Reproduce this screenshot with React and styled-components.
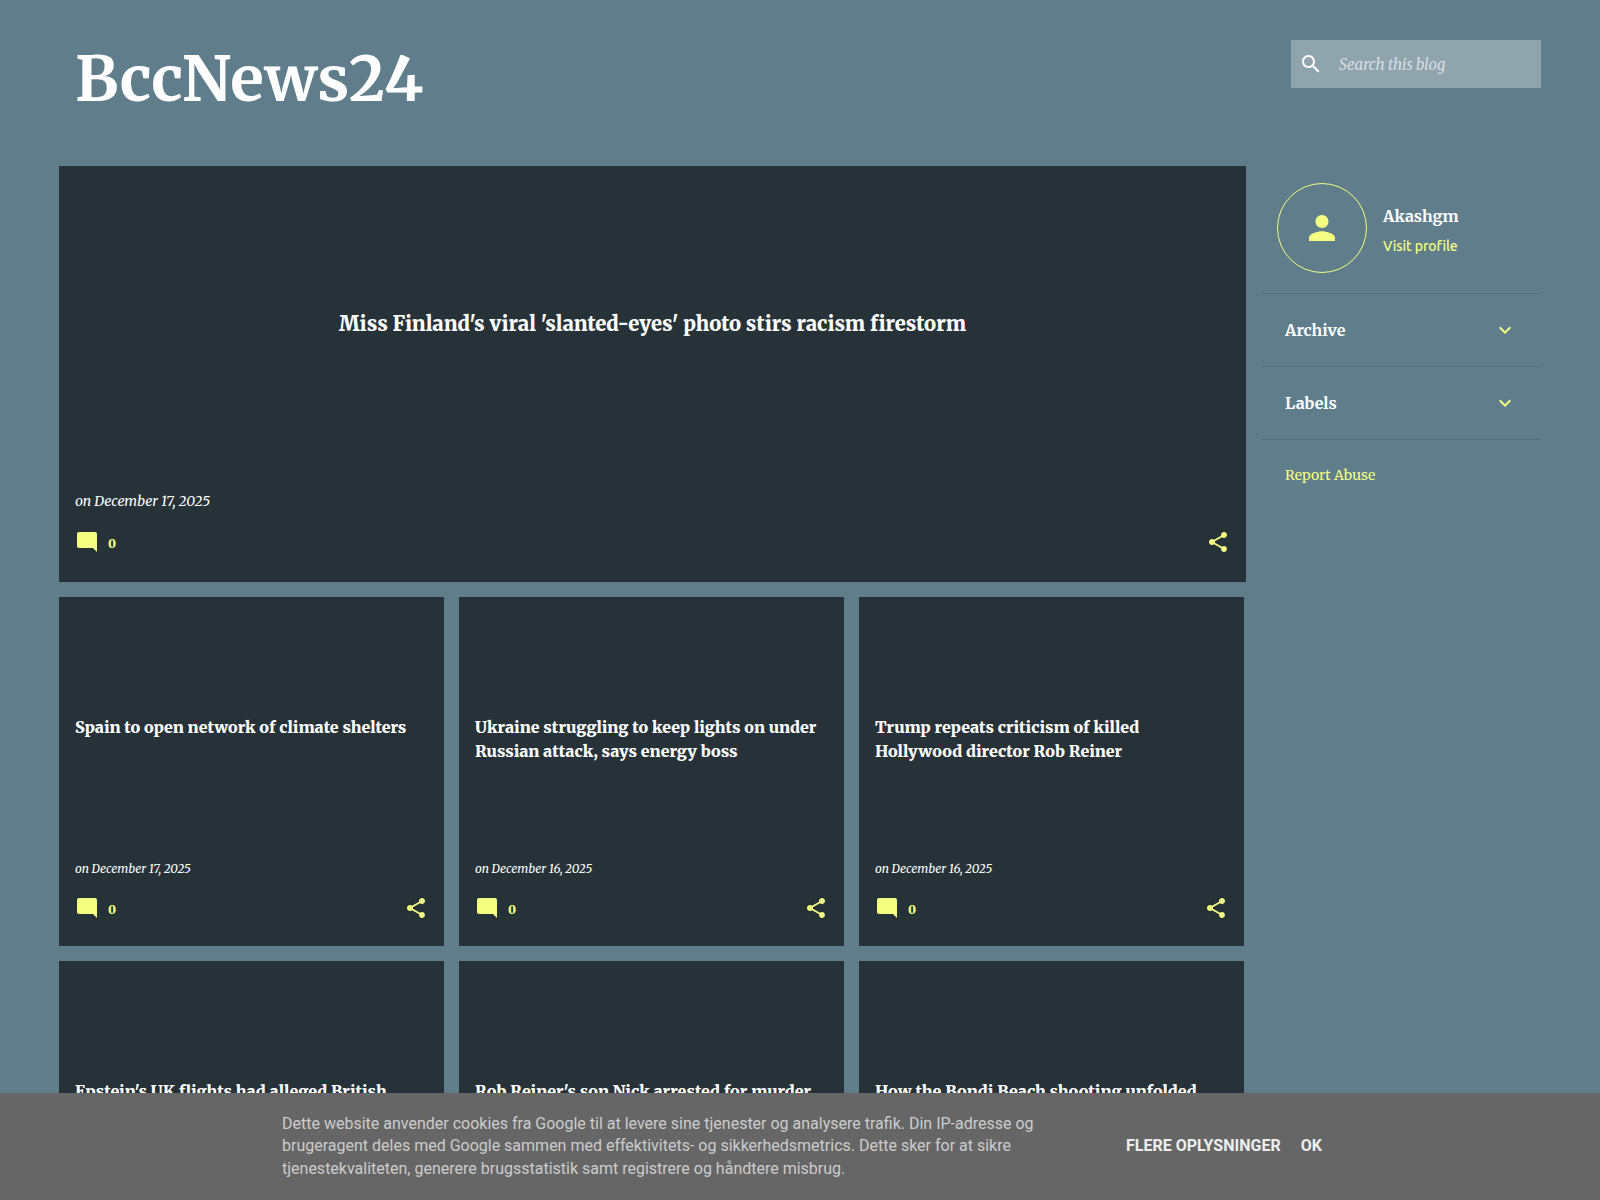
import React from 'react';
import styled, { createGlobalStyle } from 'styled-components';

const ink = '#263238';
const lime = '#f4ff81';

const GlobalStyle = createGlobalStyle`
  * { box-sizing: border-box; }
  html, body { margin: 0; height: 1200px; overflow: hidden; }
  body { background: #607d8b; color: #fff; font-family: Merriweather, "DejaVu Serif Condensed", "DejaVu Serif", serif; }
  h1, h2, h3, p { margin: 0; }
`;

const Page = styled.div`
  height: 1200px;
  overflow: hidden;
  padding: 0 59px;
`;

const Header = styled.header`
  display: flex;
  justify-content: space-between;
  height: 166px;
`;

const BlogTitle = styled.h1`
  padding: 39px 0 0 16px;
  font-size: 62px;
  line-height: 80px;
  font-weight: 700;
  white-space: nowrap;
`;

const Search = styled.label`
  display: flex;
  align-items: center;
  width: 250px;
  height: 48px;
  margin-top: 40px;
  padding-left: 8px;
  background: rgba(255, 255, 255, 0.3);
`;

const SearchText = styled.span`
  margin: 2px 0 0 16px;
  font-style: italic;
  font-size: 15px;
  line-height: 24px;
  color: rgba(255, 255, 255, 0.65);
  white-space: nowrap;
`;

const Glyph = styled.svg`
  display: block;
  flex: none;
  width: ${(p) => p.$size || 24}px;
  height: ${(p) => p.$size || 24}px;
  fill: ${(p) => p.$color || lime};
`;

const Columns = styled.div`
  display: flex;
  gap: 15px;
`;

const Feed = styled.main`
  display: flex;
  flex-direction: column;
  gap: 15px;
  width: 1187px;
`;

const Grid = styled.div`
  display: grid;
  grid-template-columns: repeat(3, 385px);
  gap: 15px;
`;

const Card = styled.article`
  display: flex;
  flex-direction: column;
  height: ${(p) => (p.$hero ? 416 : 349)}px;
  padding: ${(p) => (p.$hero ? 140 : 118)}px 16px ${(p) => (p.$hero ? 28 : 26)}px;
  background: ${ink};
`;

const HeroTitle = styled.h2`
  text-align: center;
  font-size: 20px;
  font-weight: 900;
  line-height: 36px;
  white-space: nowrap;
`;

const CardTitle = styled.h3`
  font-size: 16px;
  font-weight: 900;
  line-height: 24px;
  white-space: pre;
`;

const PostDate = styled.p`
  margin-top: auto;
  font-style: italic;
  font-size: ${(p) => (p.$hero ? 14 : 12)}px;
  line-height: 20px;
`;

const CardActions = styled.footer`
  display: flex;
  justify-content: space-between;
  height: 24px;
  margin-top: ${(p) => (p.$hero ? 19 : 17)}px;
`;

const Comments = styled.a`
  display: flex;
  align-items: center;
  gap: 9px;
  font-size: 12px;
  line-height: 20px;
  padding-top: 4px;
  font-weight: 900;
  color: ${lime};
  ${Glyph} { margin-top: -4px; }
`;

const Sidebar = styled.aside`
  width: 280px;
`;

const Profile = styled.section`
  display: flex;
  height: 128px;
  padding: 17px 0 0 16px;
  gap: 16px;
  border-bottom: 1px solid #546e7a;
`;

const Avatar = styled.div`
  display: grid;
  place-items: center;
  width: 90px;
  height: 90px;
  border: 1px solid ${lime};
  border-radius: 50%;
`;

const ProfileText = styled.div`
  padding-top: 21px;
  white-space: nowrap;
`;

const ProfileName = styled.h3`
  font-size: 16px;
  line-height: 24px;
`;

const ProfileLink = styled.a`
  display: block;
  margin-top: 8px;
  font: 500 14px/20px Ubuntu, "Noto Sans", sans-serif;
  letter-spacing: -0.08px;
  color: ${lime};
`;

const Widget = styled.section`
  display: flex;
  align-items: center;
  justify-content: space-between;
  height: 73px;
  padding: 0 24px;
  border-bottom: 1px solid #546e7a;
`;

const WidgetTitle = styled.h3`
  font-size: 16px;
  line-height: 24px;
`;

const ReportLink = styled.a`
  display: block;
  padding: 25px 24px;
  font-size: 14px;
  line-height: 20px;
  color: ${lime};
`;

const CookieBar = styled.div`
  position: fixed;
  left: 0;
  right: 0;
  bottom: 0;
  display: flex;
  align-items: center;
  height: 107px;
  padding-left: 282px;
  background: #666;
  font-family: Roboto, sans-serif;
  font-size: 16px;
`;

const CookieText = styled.p`
  width: 844px;
  line-height: 22.4px;
  color: #ccc;
  white-space: pre;
`;

const CookieButton = styled.a`
  margin: -2px 20px 0 0;
  font-weight: 700;
  color: #eee;
  white-space: nowrap;
`;

const paths = {
  search: 'M15.5 14h-.79l-.28-.27C15.41 12.59 16 11.11 16 9.5 16 5.91 13.09 3 9.5 3S3 5.91 3 9.5 5.91 16 9.5 16c1.61 0 3.09-.59 4.23-1.57l.27.28v.79l5 4.99L20.49 19l-4.99-5zm-6 0C7.01 14 5 11.99 5 9.5S7.01 5 9.5 5 14 7.01 14 9.5 11.99 14 9.5 14z',
  comment: 'M21.99 4c0-1.1-.89-2-1.99-2H4c-1.1 0-2 .9-2 2v12c0 1.1.9 2 2 2h14l4 4-.01-18z',
  share: 'M18 16.08c-.76 0-1.44.3-1.96.77L8.91 12.7c.05-.23.09-.46.09-.7s-.04-.47-.09-.7l7.05-4.11c.54.5 1.25.81 2.04.81 1.66 0 3-1.34 3-3s-1.34-3-3-3-3 1.34-3 3c0 .24.04.47.09.7L8.04 9.81C7.5 9.31 6.79 9 6 9c-1.66 0-3 1.34-3 3s1.34 3 3 3c.79 0 1.5-.31 2.04-.81l7.12 4.16c-.05.21-.08.43-.08.65 0 1.61 1.31 2.92 2.92 2.92s2.92-1.31 2.92-2.92-1.31-2.92-2.92-2.92z',
  person: 'M12 12c2.21 0 4-1.79 4-4s-1.79-4-4-4-4 1.79-4 4 1.79 4 4 4zm0 2c-2.67 0-8 1.34-8 4v2h16v-2c0-2.66-5.33-4-8-4z',
  expand: 'M7.41 8.59L12 13.17l4.59-4.58L18 10l-6 6-6-6z',
};

const Icon = ({ name, size, color, box = '0 0 24 24' }) => (
  <Glyph viewBox={box} $size={size} $color={color}>
    <path d={paths[name]} />
  </Glyph>
);

const posts = [
  { title: 'Spain to open network of climate shelters', date: 'December 17, 2025' },
  { title: 'Ukraine struggling to keep lights on under\nRussian attack, says energy boss', date: 'December 16, 2025' },
  { title: 'Trump repeats criticism of killed\nHollywood director Rob Reiner', date: 'December 16, 2025' },
  { title: "Epstein's UK flights had alleged British" },
  { title: "Rob Reiner's son Nick arrested for murder" },
  { title: 'How the Bondi Beach shooting unfolded' },
];

const PostFooter = ({ date, hero }) => (
  <>
    <PostDate $hero={hero}>on {date}</PostDate>
    <CardActions $hero={hero}>
      <Comments><Icon name="comment" />0</Comments>
      <Icon name="share" />
    </CardActions>
  </>
);

export default function App() {
  return (
    <>
      <GlobalStyle />
      <Page>
        <Header>
          <BlogTitle>BccNews24</BlogTitle>
          <Search>
            <Icon name="search" color="#fff" />
            <SearchText>Search this blog</SearchText>
          </Search>
        </Header>
        <Columns>
          <Feed>
            <Card $hero>
              <HeroTitle>Miss Finland's viral 'slanted-eyes' photo stirs racism firestorm</HeroTitle>
              <PostFooter hero date="December 17, 2025" />
            </Card>
            <Grid>
              {posts.map((post) => (
                <Card key={post.title}>
                  <CardTitle>{post.title}</CardTitle>
                  {post.date && <PostFooter date={post.date} />}
                </Card>
              ))}
            </Grid>
          </Feed>
          <Sidebar>
            <Profile>
              <Avatar><Icon name="person" size={26} box="4 4 16 16" /></Avatar>
              <ProfileText>
                <ProfileName>Akashgm</ProfileName>
                <ProfileLink>Visit profile</ProfileLink>
              </ProfileText>
            </Profile>
            <Widget><WidgetTitle>Archive</WidgetTitle><Icon name="expand" /></Widget>
            <Widget><WidgetTitle>Labels</WidgetTitle><Icon name="expand" /></Widget>
            <ReportLink>Report Abuse</ReportLink>
          </Sidebar>
        </Columns>
      </Page>
      <CookieBar>
        <CookieText>{'Dette website anvender cookies fra Google til at levere sine tjenester og analysere trafik. Din IP-adresse og\nbrugeragent deles med Google sammen med effektivitets- og sikkerhedsmetrics. Dette sker for at sikre\ntjenestekvaliteten, generere brugsstatistik samt registrere og håndtere misbrug.'}</CookieText>
        <CookieButton>FLERE OPLYSNINGER</CookieButton>
        <CookieButton>OK</CookieButton>
      </CookieBar>
    </>
  );
}
